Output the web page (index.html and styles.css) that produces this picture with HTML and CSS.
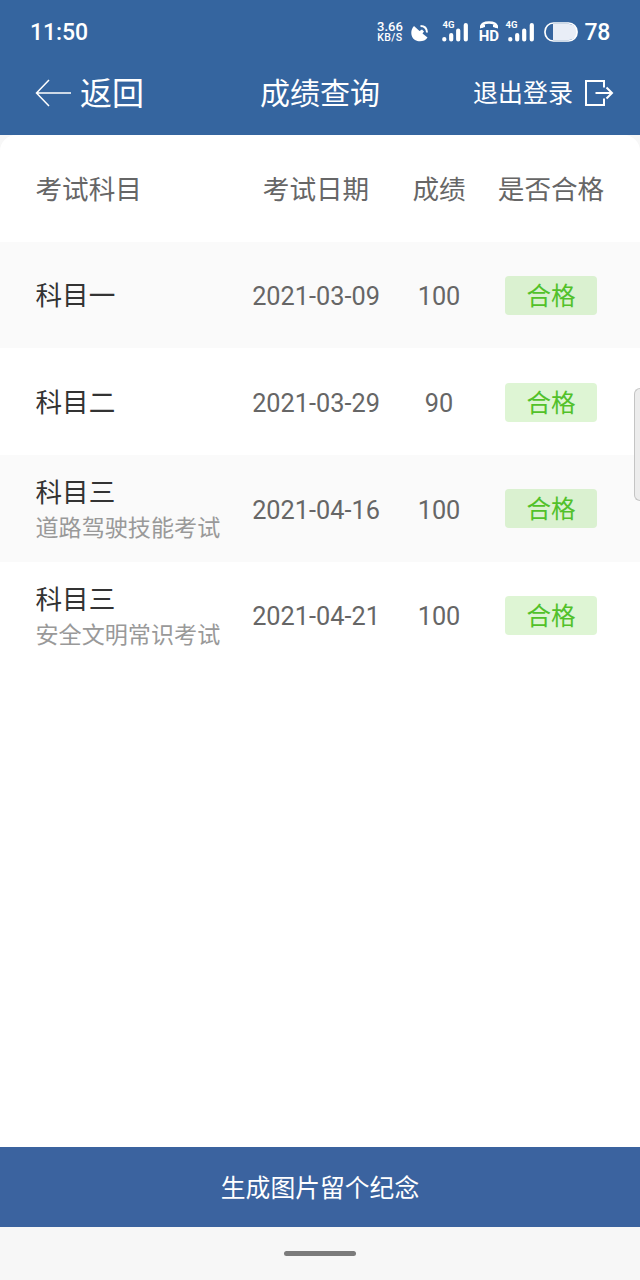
FILE: index.html
```html
<!DOCTYPE html>
<html lang="zh-CN">
<head>
    <meta charset="UTF-8">
    <meta name="viewport" content="width=device-width, initial-scale=1.0">
    <title>成绩查询</title>
    <link rel="stylesheet" href="styles.css">
</head>
<body>

    <header class="header">
        <!-- Status bar -->
        <div class="status-bar">
            <span class="clock">11:50</span>
            <div class="status-icons">
                <div class="net-speed"><span class="speed">3.66</span><span class="unit">KB/S</span></div>
                <svg class="icon-dish" width="18" height="20" viewBox="0 0 18 20">
                    <path d="M3 4C-1 8.500 -0.500 15 4 18C8 20.500 14 19.500 16.500 15.500L11.500 11.500L13 9.500L11 7.500L8.500 9Z" fill="#fff"/>
                    <path d="M9.500 4C13.500 4 15.800 6 16 10.500" fill="none" stroke="#fff" stroke-width="2"/>
                </svg>
                <div class="signal signal-first">
                    <span class="signal-label">4G</span>
                    <svg width="27" height="20" viewBox="0 0 27 20" stroke="#fff" stroke-width="4.200" stroke-linecap="round">
                        <path d="M2.300 17V17.500M9.200 13V17.500M16.200 8.500V17.500M23.800 3V17.500"/>
                    </svg>
                </div>
                <div class="hd">
                    <svg width="20" height="8" viewBox="0 0 20 8">
                        <path d="M2.300 7V5.500Q3 1.500 10 1.500T17.700 5.500V7" fill="none" stroke="#fff" stroke-width="2.500"/>
                        <path d="M1 4.500L6 3.500V6L1 7.500ZM19 4.500L14 3.500V6L19 7.500Z" fill="#fff"/>
                    </svg>
                    <span>HD</span>
                </div>
                <div class="signal signal-second">
                    <span class="signal-label">4G</span>
                    <svg width="27" height="20" viewBox="0 0 27 20" stroke="#fff" stroke-width="4.200" stroke-linecap="round">
                        <path d="M2.300 17V17.500M9.200 13V17.500M16.200 8.500V17.500M23.800 3V17.500"/>
                    </svg>
                </div>
                <svg class="icon-battery" width="34" height="20" viewBox="0 0 34 20">
                    <path d="M9 2H25A8 8 0 0 1 25 18H9Z" fill="#e9eef7"/>
                    <rect x="1" y="1" width="32" height="18" rx="8.500" fill="none" stroke="#fff" stroke-width="1.700"/>
                </svg>
                <span class="battery-level">78</span>
            </div>
        </div>

        <!-- Title bar -->
        <nav class="nav-bar">
            <a href="#" class="back">
                <svg class="icon-back" width="37" height="28" viewBox="0 0 37 28" fill="none" stroke="#fff" stroke-width="1.500">
                    <path d="M14 1L1.500 14L14 27M1.500 14H36"/>
                </svg>
                <span>返回</span>
            </a>
            <h1 class="title">成绩查询</h1>
            <a href="#" class="logout">
                <span>退出登录</span>
                <svg class="icon-logout" width="30" height="28" viewBox="0 0 30 28" fill="none" stroke="#fff" stroke-width="2">
                    <path d="M20 8.500V2H2V26H20V19.500M11.500 14H28M22.500 8.500L28 14L22.500 19.500"/>
                </svg>
            </a>
        </nav>
    </header>

    <!-- Score list -->
    <main class="content">
        <div class="table">
            <div class="row table-head">
                <span class="subject">考试科目</span>
                <span>考试日期</span>
                <span>成绩</span>
                <span>是否合格</span>
            </div>
            <div class="row shaded">
                <div class="subject"><span class="name">科目一</span></div>
                <span class="value">2021-03-09</span>
                <span class="value">100</span>
                <span class="badge">合格</span>
            </div>
            <div class="row">
                <div class="subject"><span class="name">科目二</span></div>
                <span class="value">2021-03-29</span>
                <span class="value">90</span>
                <span class="badge">合格</span>
            </div>
            <div class="row shaded">
                <div class="subject"><span class="name">科目三</span><span class="detail">道路驾驶技能考试</span></div>
                <span class="value">2021-04-16</span>
                <span class="value">100</span>
                <span class="badge">合格</span>
            </div>
            <div class="row">
                <div class="subject"><span class="name">科目三</span><span class="detail">安全文明常识考试</span></div>
                <span class="value">2021-04-21</span>
                <span class="value">100</span>
                <span class="badge">合格</span>
            </div>
        </div>
    </main>

    <button class="share-button">生成图片留个纪念</button>
    <footer class="home-bar"><span class="home-line"></span></footer>

    <!-- Edge handle over the list -->
    <div class="edge-handle"></div>

</body>
</html>
```

FILE: styles.css
```css
* {
    box-sizing: border-box;
}
body {
    display: flex;
    flex-direction: column;
    height: 1280px;
    margin: 0;
    overflow: hidden;
    background-color: #f7f7f7;
    font-family: Roboto, "Noto Sans CJK SC", sans-serif;
}
a {
    color: inherit;
    text-decoration: none;
}
svg {
    display: block;
    flex: none;
}

/* Header */
.header {
    height: 135px;
    background-color: #35659f;
    color: #fff;
}
.status-bar {
    display: flex;
    justify-content: space-between;
    align-items: center;
    height: 64px;
    padding: 0 30px;
}
.clock {
    font-size: 23px;
    font-weight: 500;
    letter-spacing: -0.1px;
}
.status-icons {
    display: flex;
    align-items: center;
}
.net-speed {
    display: flex;
    flex-direction: column;
    align-items: center;
    width: 27px;
    margin-right: 8px;
    font-weight: 500;
    white-space: nowrap;
}
.speed {
    font-size: 13px;
    line-height: 11px;
}
.unit {
    font-size: 10.5px;
    line-height: 11px;
    letter-spacing: 0.4px;
}
.icon-dish {
    margin-right: 13px;
}
.signal {
    position: relative;
}
.signal-first {
    margin-right: 9px;
}
.signal-second {
    margin-right: 9px;
}
.signal-label {
    position: absolute;
    top: -3px;
    left: 0;
    font-size: 9.5px;
    font-weight: 700;
    line-height: 12px;
}
.signal-second .signal-label {
    left: -3px;
}
.hd {
    display: flex;
    flex-direction: column;
    align-items: center;
    width: 21px;
    margin-right: 9px;
    font-size: 15px;
    font-weight: 700;
    line-height: 14px;
}
.icon-battery {
    margin-right: 6px;
}
.battery-level {
    font-size: 23px;
    font-weight: 500;
    letter-spacing: -0.3px;
}
.nav-bar {
    display: grid;
    grid-template-columns: 1fr auto 1fr;
    align-items: center;
    height: 60px;
    padding: 0 26px 0 35px;
}
.back,
.logout {
    display: flex;
    align-items: center;
}
.back {
    gap: 8px;
    font-size: 32px;
    line-height: 40px;
}
.icon-back,
.icon-logout {
    margin-bottom: 3px;
}
.title {
    margin: 0 9px 0 0;
    font-size: 30px;
    font-weight: 400;
    line-height: 40px;
}
.logout {
    justify-content: flex-end;
    gap: 11px;
    font-size: 25px;
    line-height: 40px;
}

/* Score list */
.content {
    flex: 1;
    background-color: #fff;
    border-radius: 16px 16px 0 0;
}
.row {
    display: grid;
    grid-template-columns: 204px 152px 94px 130px;
    align-items: center;
    justify-items: center;
    height: 106.67px;
    padding-left: 36px;
}
.table-head {
    padding-bottom: 2px;
    color: #666;
    font-size: 26.6px;
}
.shaded {
    background-color: #fafafa;
}
.subject {
    display: flex;
    flex-direction: column;
    justify-self: start;
    margin-left: -0.5px;
}
.name {
    padding-top: 2px;
    color: #333;
    font-size: 26.6px;
    line-height: 36px;
}
.detail {
    margin-bottom: -3px;
    color: #999;
    font-size: 23.1px;
    line-height: 35px;
}
.value {
    padding-top: 4px;
    color: #666;
    font-size: 25.3px;
}
.badge {
    width: 92px;
    height: 39px;
    margin-top: 1px;
    border-radius: 4px;
    background-color: rgba(82, 204, 26, 0.19);
    color: #52c12a;
    font-size: 24.6px;
    line-height: 42px;
    text-align: center;
}

/* Bottom area */
.share-button {
    height: 80px;
    padding: 0 0 2px;
    border: 0;
    background-color: #3b639f;
    color: #fff;
    font-family: inherit;
    font-size: 24.8px;
}
.home-bar {
    display: flex;
    align-items: center;
    justify-content: center;
    height: 53px;
}
.home-line {
    width: 72px;
    height: 5px;
    border-radius: 3px;
    background-color: #7b7b7b;
}
.edge-handle {
    position: absolute;
    top: 388px;
    right: 0;
    width: 6px;
    height: 113px;
    border: 1px solid #c4c4c4;
    border-right: 0;
    border-radius: 7px 0 0 7px;
    background-color: #ececec;
}
```
